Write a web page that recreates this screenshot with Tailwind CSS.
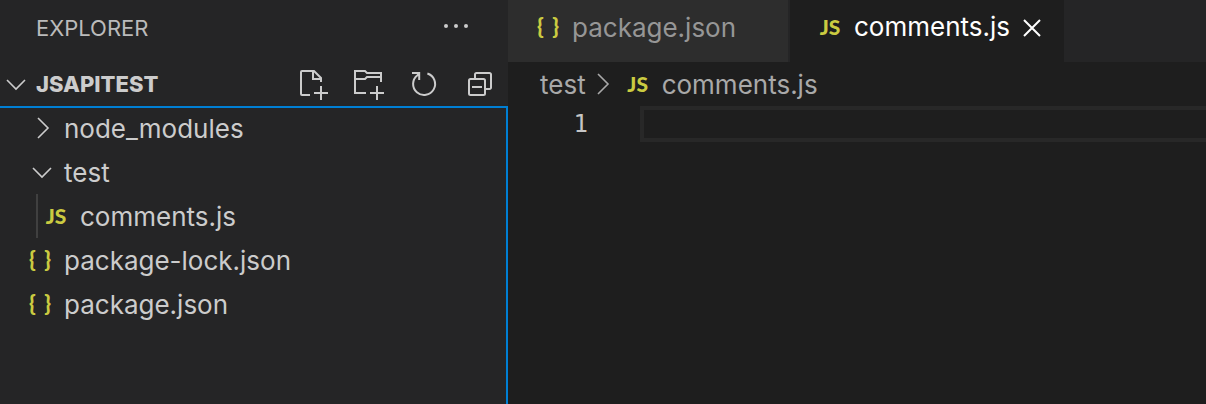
<!DOCTYPE html>
<html lang="en">
<head>
    <meta charset="UTF-8">
    <meta name="viewport" content="width=device-width, initial-scale=1.0">
    <title>comments.js - jsapitest</title>
    <script src="https://cdn.jsdelivr.net/npm/@tailwindcss/browser@4"></script>
</head>
<body class="flex min-h-screen bg-[#1e1e1e] font-['Inter',sans-serif] text-[26px] leading-8 text-[#cccccc]">

    <!-- Sidebar -->
    <aside class="flex w-[508px] shrink-0 flex-col bg-[#252526]">
        <header class="flex h-[62px] items-center justify-between pr-9 pb-1.5 pl-9">
            <h2 class="text-[22px] text-[#bbbbbb]">EXPLORER</h2>
            <button type="button" aria-label="More actions">
                <svg class="size-8" viewBox="0 0 32 32" fill="currentColor">
                    <circle cx="6" cy="14" r="2"/><circle cx="16" cy="14" r="2"/><circle cx="26" cy="14" r="2"/>
                </svg>
            </button>
        </header>

        <div class="flex h-11 items-center pr-2.5">
            <button type="button" class="flex items-center gap-1 text-[22px] font-extrabold" aria-expanded="true">
                <svg class="size-8" viewBox="0 0 32 32" fill="none" stroke="currentColor" stroke-width="1.6"><path d="M7 12l9 9 9-9"/></svg>
                JSAPITEST
            </button>
            <div class="ml-auto flex gap-6">
                <button type="button" aria-label="New file">
                    <svg class="size-8" viewBox="0 0 32 32" fill="none" stroke="currentColor" stroke-width="2"><path d="M12 27H4a1 1 0 0 1-1-1V4a1 1 0 0 1 1-1h12l7 7v4M15 3v8h8M23 18v14M16 25h14"/></svg>
                </button>
                <button type="button" aria-label="New folder">
                    <svg class="size-8" viewBox="0 0 32 32" fill="none" stroke="currentColor" stroke-width="2"><path d="M12 25H1V3h10l2 2h14v9M1 11h10l2-2h14M23 18v14M16 25h14"/></svg>
                </button>
                <button type="button" aria-label="Refresh">
                    <svg class="size-8" viewBox="0 0 32 32" fill="none" stroke="currentColor" stroke-width="2"><path d="M17.4 5.5A11 11 0 1 1 7.5 7.2L9 5.5M2 5h7.2v7"/></svg>
                </button>
                <button type="button" aria-label="Collapse all">
                    <svg class="size-8" viewBox="0 0 32 32" fill="none" stroke="currentColor" stroke-width="2"><rect x="3" y="11" width="16" height="16" rx="1.5"/><path d="M9 11V6.5A1.5 1.5 0 0 1 10.5 5h13A1.5 1.5 0 0 1 25 6.5v13a1.5 1.5 0 0 1-1.5 1.5H19M6 19h10"/></svg>
                </button>
            </div>
        </div>

        <!-- File tree, focus ring on top and right -->
        <ul class="flex-1 shadow-[inset_-2px_2px_0_#007fd4]">
            <li>
                <button type="button" class="flex h-11 items-center pl-6" aria-expanded="false">
                    <svg class="mr-1 h-8 w-9" viewBox="0 0 36 32" fill="none" stroke="currentColor" stroke-width="1.6"><path d="M14 6l10 10-10 10"/></svg>
                    <span class="pt-0.5">node_modules</span>
                </button>
            </li>
            <li>
                <button type="button" class="flex h-11 items-center pl-6" aria-expanded="true">
                    <svg class="mr-1 h-8 w-9" viewBox="0 0 36 32" fill="none" stroke="currentColor" stroke-width="1.6"><path d="M9 12l9 9 9-9"/></svg>
                    <span class="pt-0.5">test</span>
                </button>
                <ul class="ml-9 border-l-2 border-[#404040]">
                    <li>
                        <button type="button" class="flex h-11 items-center pl-0.5">
                            <span class="mr-2 w-8 text-center font-['Lato',sans-serif] text-[21px] font-black text-[#cbcb41]">JS</span>
                            <span class="pt-0.5">comments.js</span>
                        </button>
                    </li>
                </ul>
            </li>
            <li>
                <button type="button" class="flex h-11 items-center pl-6">
                    <span class="mr-2 flex w-8 justify-between px-[5px] pb-0.5 font-['Lato',sans-serif] text-[22px] font-black text-[#cbcb41]"><span>{</span><span>}</span></span>
                    <span class="pt-0.5">package-lock.json</span>
                </button>
            </li>
            <li>
                <button type="button" class="flex h-11 items-center pl-6">
                    <span class="mr-2 flex w-8 justify-between px-[5px] pb-0.5 font-['Lato',sans-serif] text-[22px] font-black text-[#cbcb41]"><span>{</span><span>}</span></span>
                    <span class="pt-0.5">package.json</span>
                </button>
            </li>
        </ul>
    </aside>

    <!-- Editor -->
    <main class="min-w-0 flex-1">
        <div class="flex h-[62px] bg-[#252526]">
            <button type="button" class="flex w-[282px] items-center border-r-2 border-[#252526] bg-[#2d2d2d] pb-2 pl-6 text-[#969696]">
                <span class="mr-2 flex w-8 justify-between px-[5px] pb-0.5 font-['Lato',sans-serif] text-[22px] font-black text-[#cbcb41]"><span>{</span><span>}</span></span>
                <span class="pt-0.5">package.json</span>
            </button>
            <div class="flex w-[274px] items-center bg-[#1e1e1e] pr-4 pb-2 pl-6 text-white">
                <button type="button" class="flex items-center">
                    <span class="mr-2 w-8 text-center font-['Lato',sans-serif] text-[21px] font-black text-[#cbcb41]">JS</span>
                    <span>comments.js</span>
                </button>
                <button type="button" class="ml-auto" aria-label="Close">
                    <svg class="size-8" viewBox="0 0 32 32" fill="none" stroke="currentColor" stroke-width="2"><path d="M8 9l16 16M24 9L8 25"/></svg>
                </button>
            </div>
        </div>

        <nav class="flex h-11 items-center pl-8 text-[#a9a9a9]" aria-label="Breadcrumb">
            <a href="#" class="pt-0.5">test</a>
            <svg class="size-8" viewBox="0 0 32 32" fill="none" stroke="currentColor" stroke-width="1.6"><path d="M12 6l10 10-10 10"/></svg>
            <a href="#" class="flex items-center pl-1">
                <span class="mr-2 w-8 text-center font-['Lato',sans-serif] text-[21px] font-black text-[#cbcb41]">JS</span>
                <span class="pt-0.5">comments.js</span>
            </a>
        </nav>

        <div class="flex h-9 font-['DejaVu_Sans_Mono',monospace] text-[24px]">
            <label for="line1" class="w-[132px] pr-[52px] text-right leading-9 text-[#c6c6c6]">1</label>
            <input id="line1" type="text" class="min-w-0 flex-1 border-4 border-r-0 border-[#282828] outline-none">
        </div>
    </main>

</body>
</html>
